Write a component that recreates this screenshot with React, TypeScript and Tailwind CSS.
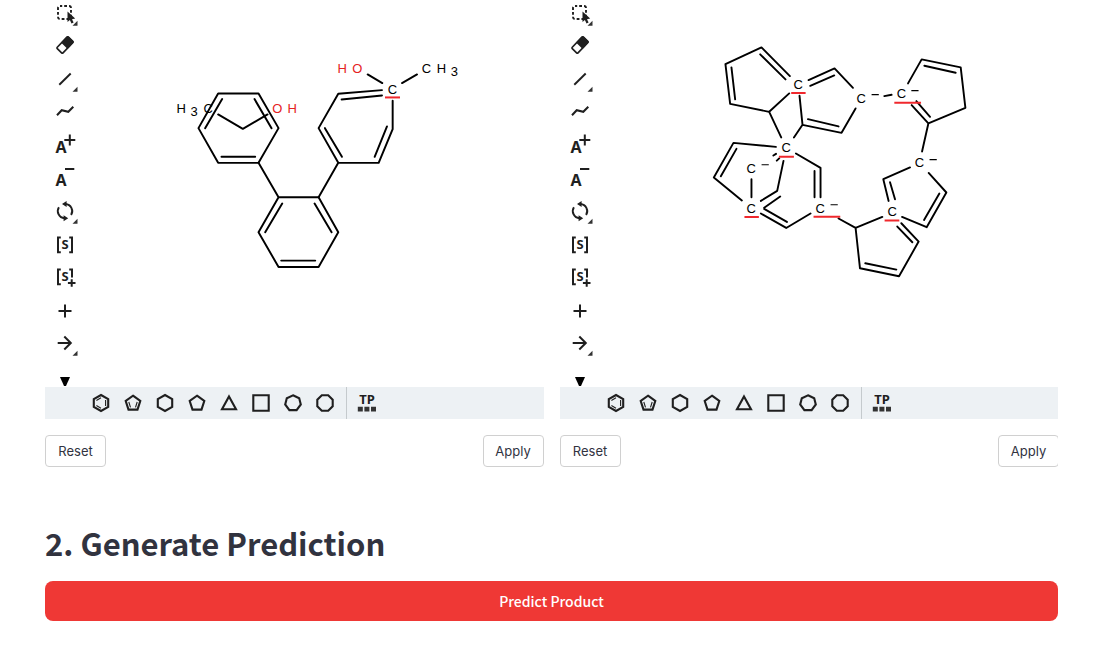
import type { ReactNode } from "react";

const ink = "#1f1f1f";

function Corner() {
  return <path d="M32.5 23.7v5h-5z" fill="#333" stroke="none" />;
}

function Glyph({ x, y, size, children }: { x: number; y: number; size: number; children: string }) {
  return (
    <text x={x} y={y} fontSize={size} fontWeight="700" textAnchor="middle" fill={ink} stroke="none" fontFamily='"Noto Sans", sans-serif'>
      {children}
    </text>
  );
}

const tools: { name: string; icon: ReactNode }[] = [
  {
    name: "Select",
    icon: (
      <>
        <rect x="13" y="9" width="13" height="13" rx="2" strokeWidth="1.9" strokeDasharray="2.8 2" strokeDashoffset="0.6" />
        <path d="M22.5 14.5v10.4l2.4-1.9 1.6 3.6 2.1-1-1.6-3.4 3.2-.6z" fill={ink} stroke="none" />
        <Corner />
      </>
    ),
  },
  {
    name: "Erase",
    icon: (
      <g transform="rotate(-46 20 15)">
        <rect x="12" y="11" width="16" height="8" rx="1" strokeWidth="1.7" />
        <path d="M19 10.4h8.4a1.4 1.4 0 0 1 1.4 1.4v6.4a1.4 1.4 0 0 1-1.4 1.4H19z" fill={ink} stroke="none" />
      </g>
    ),
  },
  {
    name: "Single bond",
    icon: (
      <>
        <path d="M14.3 21.7 25.7 10.5" strokeWidth="1.9" />
        <Corner />
      </>
    ),
  },
  { name: "Chain", icon: <path d="M12 19.3 16.7 14.2l6.6 1.6 5-5" strokeWidth="2" /> },
  {
    name: "Charge plus",
    icon: (
      <>
        <Glyph x={16} y={24} size={16}>A</Glyph>
        <path d="M24.8 5.5v11M19.3 11h11" />
      </>
    ),
  },
  {
    name: "Charge minus",
    icon: (
      <>
        <Glyph x={16} y={24} size={16}>A</Glyph>
        <path d="M20 7h9.3" />
      </>
    ),
  },
  {
    name: "Rotate",
    icon: (
      <>
        <path d="M20.5 9a7.2 7.2 0 0 1 5.6 11M19.5 23.2a7.2 7.2 0 0 1-5.6-11" strokeWidth="1.9" />
        <path d="M17 9l4.6-3v6zM23.2 23.2l-4.6-3v6z" fill={ink} stroke="none" />
        <Corner />
      </>
    ),
  },
  {
    name: "S-Group",
    icon: (
      <>
        <path d="M15.8 9.4h-2.8v14.8h2.8M24.2 9.4h2.8v14.8h-2.8" strokeWidth="2" />
        <Glyph x={20} y={21} size={13}>S</Glyph>
      </>
    ),
  },
  {
    name: "Data S-Group",
    icon: (
      <>
        <path d="M15.8 8.4h-2.8v14.8h2.8M24.2 8.4h2.8v8" strokeWidth="2" />
        <Glyph x={20} y={20} size={13}>S</Glyph>
        <path d="M26.7 18.2v7.6M22.9 22h7.6" strokeWidth="2" />
      </>
    ),
  },
  { name: "Reaction plus", icon: <path d="M20 10.5v13M13.5 17h13" strokeWidth="2" /> },
  {
    name: "Reaction arrow",
    icon: (
      <>
        <path d="M12.7 16h13.6M19.3 9.5l6.5 6.5-6.5 6.5" strokeWidth="2" />
        <Corner />
      </>
    ),
  },
];

const rings: { name: string; icon: ReactNode }[] = [
  {
    name: "Benzene",
    icon: (
      <>
        <path d="M16 8l7.2 4v8L16 24l-7.2-4v-8z" />
        <path d="M20.6 13v6M11.4 13.4l4.6-2.6M11.4 18.6l4.6 2.6" strokeWidth="1.1" />
      </>
    ),
  },
  {
    name: "Cyclopentadiene",
    icon: (
      <>
        <path d="M16 8.7l7.3 5.3-2.8 8.6h-9L8.7 14z" />
        <path d="M11.8 15l1.7 5.4M20.2 15l-1.7 5.4" strokeWidth="1.1" />
      </>
    ),
  },
  { name: "Cyclohexane", icon: <path d="M16 8l7.2 4v8L16 24l-7.2-4v-8z" /> },
  { name: "Cyclopentane", icon: <path d="M16 8.7l7.3 5.3-2.8 8.6h-9L8.7 14z" /> },
  { name: "Cyclopropane", icon: <path d="M16 9.5l7 12.7H9z" /> },
  { name: "Cyclobutane", icon: <path d="M8.3 8.3h15.4v15.4H8.3z" /> },
  { name: "Cycloheptane", icon: <path d="M16 8.3l6.2 3 1.6 6.2-4.2 5.6h-7.2l-4.2-5.6 1.6-6.2z" /> },
  { name: "Cyclooctane", icon: <path d="M12.8 8.3h6.4l4.5 4.5v6.4l-4.5 4.5h-6.4l-4.5-4.5v-6.4z" /> },
];

function Atom({ x, y, red, children }: { x: number; y: number; red?: boolean; children: string }) {
  return (
    <text x={x} y={y} fontSize="13" textAnchor="middle" fill={red ? "#e52222" : "#000"} fontFamily='"Liberation Sans", Arial, sans-serif'>
      {children}
    </text>
  );
}

function LeftMolecule() {
  return (
    <svg className="block h-full w-full" viewBox="85 0 458 387" preserveAspectRatio="xMinYMin meet" role="img" aria-label="First reactant">
      <g transform="translate(160 50) scale(0.33333)" fill="none" stroke="#000" strokeWidth="5.8" strokeLinecap="round" strokeLinejoin="round">
        <path d="M174 130H295L355 234 295 338H174L115 234zM186 147 135 234M283 147 334 234M184 320H285" />
        <path d="M174 193 248 236 322 193" />
        <path d="M295 338 355 441H475L534 546 475 650H355L295 546 355 441M366 460 315 546M463 460 514 546M363 631H465" />
        <path d="M475 441 534 338 475 234 534 131 665 120M544 148 665 136M534 338H655L697 237V152M494 234 545 320M680 229 643 320" />
        <path d="M622 73 666 99M725 99 770 73" />
        <path d="M674 142H719" stroke="#f0282d" strokeLinecap="butt" strokeWidth="6" />
      </g>
      <Atom x={342} y={73} red>H</Atom>
      <Atom x={357} y={73} red>O</Atom>
      <Atom x={426} y={73}>C</Atom>
      <Atom x={441} y={73}>H</Atom>
      <Atom x={454} y={76}>3</Atom>
      <Atom x={392} y={94}>C</Atom>
      <Atom x={181} y={113}>H</Atom>
      <Atom x={194} y={116}>3</Atom>
      <Atom x={208} y={113}>C</Atom>
      <Atom x={277} y={113} red>O</Atom>
      <Atom x={292} y={113} red>H</Atom>
    </svg>
  );
}

function RightMolecule() {
  return (
    <svg className="block h-full w-full" viewBox="600 0 458 387" preserveAspectRatio="xMinYMin meet" role="img" aria-label="Second reactant">
      <g fill="none" stroke="#000" strokeWidth="1.9" strokeLinecap="round" strokeLinejoin="round">
        <path d="M789.7 76 761.3 47.3 725.3 64 730 103.7 769 111.7 789 93.3M760 54.3 785.3 79.3M731.3 67.3 735 99.3M769 111.7 781 137.3" />
        <path d="M808.3 80 834.3 68.3 852.7 87.7M810 85.7 834 75.3M799.3 95.7 802.3 124.7 841.3 132.7 855.3 108.3M807.7 119 838.3 126.3M802.3 124.7 793.7 137.3" />
        <path d="M884 96 891.3 94.7M907.7 83.3 921.3 59.3 960.3 67.3 965 107.7 928 123.3 911.3 105M924 65.7 955.3 72.7M916 101 929.7 116.7M928 123.3 921.7 151.3" />
        <path d="M775.7 146.7 733.3 142.7 713.7 177.3 741.7 200.3M736.3 148.7 720.7 176M751.3 179V197M783.3 160.7 777 190.7 760.7 200.7M780 196.3 764 207.5" />
        <path d="M760.7 213.3 786 227.7 810.3 213.3M764 208.7 786.7 221.7M820.3 197V167.7L795.7 153.3M814.3 170.7V197M773.2 155.3 775.8 153.7M776.6 160.5 779 158.2" />
        <path d="M838.3 218.3 855.3 227.7 882 216.7M855.3 227.7 859.7 268 898.7 276 918.3 241.3 901 223M897 226.3 912 242M865 263 896 269.3" />
        <path d="M909.7 167.3 883 179 888.3 200.7M889.7 182 894.7 199M928.3 172.7 946 192.3 926.3 227 901.7 216.7M939 193.3 923.7 219.7" />
        <path d="M871.3 94.5h7.2M911 90.5h7.2M929.2 159.5h7.2M761.4 164.5h7.2M830.3 204.5h7.2" strokeWidth="1.1" strokeLinecap="butt" />
        <path d="M791 93h14.4M778.7 156.7h15M894 102.7h26.7M744.3 216.7h14.4M813.3 216.5H840M884.3 220.3h14.7" stroke="#f0282d" strokeWidth="2" strokeLinecap="butt" />
      </g>
      <Atom x={798} y={89}>C</Atom>
      <Atom x={786} y={152}>C</Atom>
      <Atom x={861} y={103}>C</Atom>
      <Atom x={901} y={98}>C</Atom>
      <Atom x={919} y={167}>C</Atom>
      <Atom x={751} y={173}>C</Atom>
      <Atom x={751} y={213}>C</Atom>
      <Atom x={820} y={213}>C</Atom>
      <Atom x={892} y={216}>C</Atom>
    </svg>
  );
}

const actionClass =
  "h-8 w-[61px] rounded-[4px] border border-[#d0d0d0] bg-white font-['Inter',sans-serif] text-[13px] leading-5 text-[#31333f]";

function Editor({ label, children, clipped }: { label: string; children: ReactNode; clipped?: boolean }) {
  return (
    <section aria-label={label} className="min-w-0 overflow-hidden">
      <div className="flex">
        <div className="flex w-10 shrink-0 flex-col">
          {tools.map((tool, i) => (
            <button key={tool.name} type="button" aria-label={tool.name} className="block">
              <svg
                className={i === 0 ? "block h-[30px] w-10" : "block h-[33px] w-10"}
                viewBox={i === 0 ? "0 3 40 30" : "0 0 40 33"}
                fill="none"
                stroke={ink}
                strokeWidth="2"
              >
                {tool.icon}
              </svg>
            </button>
          ))}
          <button type="button" aria-label="Scroll down" className="block">
            <svg className="block h-[27px] w-10" viewBox="0 0 40 27">
              <path d="M15 17h10l-4 9h-2z" fill="#000" />
            </svg>
          </button>
        </div>
        <div className="min-w-0 flex-1">{children}</div>
      </div>
      <div className="flex h-8 bg-[#edf1f4] pl-10">
        {rings.map((ring) => (
          <button key={ring.name} type="button" aria-label={ring.name} className="size-8 shrink-0">
            <svg className="block size-8" viewBox="0 0 32 32" fill="none" stroke={ink} strokeWidth="2.1">
              {ring.icon}
            </svg>
          </button>
        ))}
        <div className="ml-[5px] mr-1 border-l border-[#c5cacd]" />
        <button type="button" aria-label="Template library" className="size-8 shrink-0">
          <svg className="block size-8" viewBox="0 0 32 32">
            <Glyph x={16} y={17} size={13}>TP</Glyph>
            <path d="M6.8 19.8h5v4.8h-5zM13.4 19.8h5v4.8h-5zM20 19.8h5v4.8h-5z" fill="#333" />
          </svg>
        </button>
      </div>
      <div className={clipped ? "-mr-px mt-4 flex justify-between" : "mt-4 flex justify-between"}>
        <button type="button" className={actionClass}>Reset</button>
        <button type="button" className={actionClass}>Apply</button>
      </div>
    </section>
  );
}

export default function App() {
  return (
    <main className="min-h-screen bg-white pl-[45px] pr-[38px] font-['Noto_Sans_CJK_SC',sans-serif] text-[#31333f]">
      <div className="grid grid-cols-2 gap-4">
        <Editor label="Reactant 1">
          <LeftMolecule />
        </Editor>
        <Editor label="Reactant 2" clipped>
          <RightMolecule />
        </Editor>
      </div>
      <h2 className="mt-[54px] text-[31px] font-semibold leading-[44px]">2. Generate Prediction</h2>
      <button type="button" className="mt-4 h-10 w-full rounded-lg bg-[#ef3835] text-[14px] font-medium leading-6 text-white">
        Predict Product
      </button>
    </main>
  );
}
